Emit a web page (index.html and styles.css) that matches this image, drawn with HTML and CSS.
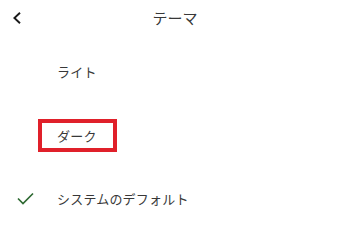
FILE: index.html
```html
<!DOCTYPE html>
<html lang="ja">
<head>
<meta charset="utf-8">
<link rel="stylesheet" href="styles.css">
</head>
<body>
<div class="screen">
  <header class="header">
    <span class="back">
      <svg width="8" height="12" viewBox="0 0 8 12"><path d="M7 0.7 L1.4 6 L7 11.3" fill="none" stroke="#1a1a1a" stroke-width="1.9"/></svg>
    </span>
    <h1 class="title">テーマ</h1>
  </header>
  <ul class="list">
    <li class="row"><span class="mark"></span><span class="label">ライト</span></li>
    <li class="row"><span class="mark"></span><span class="label boxed">ダーク</span></li>
    <li class="row"><span class="mark">
      <svg width="17" height="13" viewBox="0 0 17 13"><path d="M1 6.5 L6 11.5 L16 1.5" fill="none" stroke="#2f6a33" stroke-width="1.7"/></svg>
    </span><span class="label">システムのデフォルト</span></li>
  </ul>
</div>
</body>
</html>
```
FILE: styles.css
```css
* { box-sizing: border-box; }
html, body { margin: 0; padding: 0; background: #fff; }
body { font-family: "Noto Sans CJK JP", "Noto Sans", sans-serif; color: #383838; }
.screen { width: 340px; height: 248px; overflow: hidden; }
.header { position: relative; height: 34px; display: flex; align-items: center; justify-content: center; padding-left: 10px; }
.back { position: absolute; left: 13px; top: 12px; display: flex; }
.title { margin: 0; font-size: 15px; font-weight: 400; color: #383838; line-height: 1; }
.list { list-style: none; margin: 6px 0 0; padding: 0; }
.row { height: 63.5px; display: flex; align-items: center; }
.mark { width: 57px; padding-left: 17px; display: flex; align-items: center; }
.label { font-size: 13px; line-height: 1; letter-spacing: 0.2px; }
.boxed { display: inline-flex; align-items: center; height: 33px; border: 4px solid #e0202a; padding: 0 16px 0 15px; margin-left: -19px; }
```
